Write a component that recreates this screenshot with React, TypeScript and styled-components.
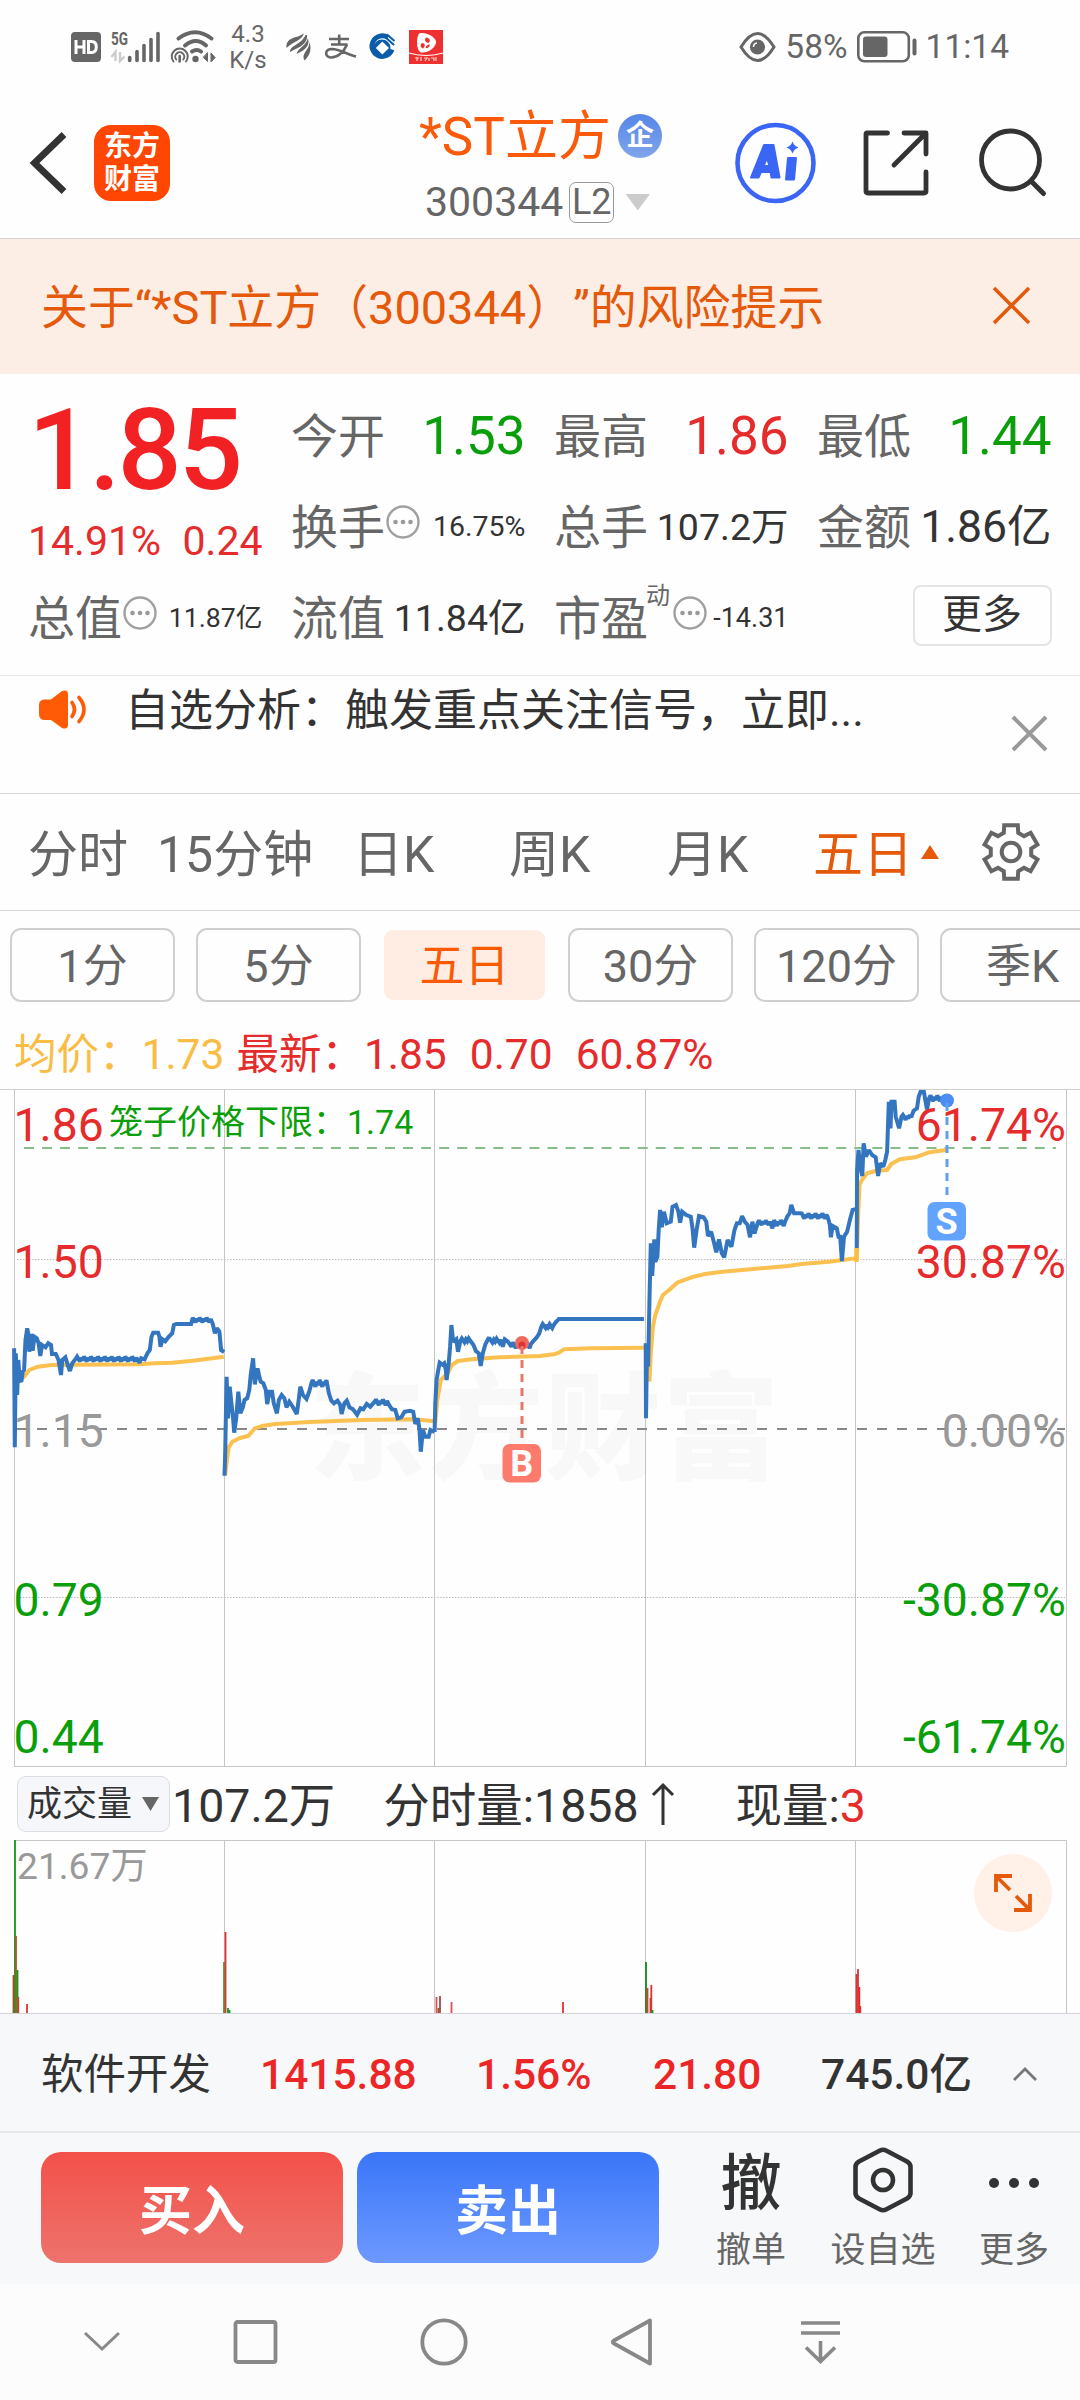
import React from 'react';
import styled, { createGlobalStyle } from 'styled-components';

const GlobalStyle = createGlobalStyle`
  * { box-sizing: border-box; }
  body {
    margin: 0;
    background: #fefefe;
    font-family: Roboto, "Noto Sans CJK SC", sans-serif;
    color: #333;
    text-spacing-trim: space-all;
  }
  svg { display: block; flex: none; overflow: visible; }
  svg text { white-space: pre; }
`;

const RED = '#e52b2b';
const GREEN = '#0a9e0a';
const ORANGE = '#e5590b';
const GREY = '#666';

const Screen = styled.div`
  width: 1080px;
  height: 2400px;
  display: flex;
  flex-direction: column;
  overflow: hidden;
  white-space: nowrap;
  background: #fefefe;
`;

/* ---------- status bar ---------- */
const StatusBar = styled.div`
  height: 88px;
  padding: 6px 71px 0 71px;
  display: flex;
  align-items: center;
  justify-content: space-between;
  color: ${GREY};
`;
const StatusGroup = styled.div<{ $gap?: number }>`
  display: flex;
  align-items: center;
  gap: ${p => p.$gap ?? 0}px;
`;
const Speed = styled.div`
  width: 62px;
  margin-right: 7px;
  text-align: center;
  font-size: 24px;
  line-height: 26px;
  margin-top: -1px;
`;
const StatusText = styled.span`
  font-size: 33.5px;
  line-height: 40px;
`;

/* ---------- header ---------- */
const Header = styled.header`
  height: 150px;
  display: flex;
  align-items: center;
  padding-left: 28px;
`;
const Logo = styled.div`
  width: 76px;
  height: 76px;
  margin-left: 26px;
  border-radius: 17px;
  background: #ff4602;
  color: #fff;
  font-weight: 700;
  font-size: 28px;
  line-height: 33px;
  text-align: center;
  padding-top: 5px;
`;
const TitleBlock = styled.div`
  width: 316px;
  margin: 12px 0 0 249px;
  display: flex;
  flex-direction: column;
`;
const TitleRow = styled.div`
  height: 66px;
  display: flex;
  align-items: center;
  font-size: 53px;
  line-height: 66px;
  color: #fa5a0a;
`;
const TitleText = styled.span`
  margin-top: 2px;
`;
const Badge = styled.span`
  width: 44px;
  height: 44px;
  margin-left: 7px;
  border-radius: 50%;
  background: linear-gradient(#5585e8, #80a6ea);
  color: #fff;
  font-size: 28px;
  font-weight: 700;
  line-height: 43px;
  text-align: center;
`;
const CodeRow = styled.div`
  height: 66px;
  padding-left: 6px;
  display: flex;
  align-items: center;
  font-size: 41px;
  color: ${GREY};
`;
const Level = styled.span`
  width: 45px;
  height: 41px;
  margin-left: 6px;
  border: 1.5px solid #999;
  border-radius: 7px;
  font-size: 36px;
  line-height: 38px;
  text-align: center;
`;
const Caret = styled.i<{ $w: number; $h: number; $c: string; $up?: boolean; $ml?: number }>`
  width: ${p => p.$w}px;
  height: ${p => p.$h}px;
  margin-left: ${p => p.$ml ?? 0}px;
  background: ${p => p.$c};
  clip-path: ${p => (p.$up ? 'polygon(50% 0, 100% 100%, 0 100%)' : 'polygon(0 0, 100% 0, 50% 100%)')};
`;
const HeaderIcons = styled.div`
  display: flex;
  align-items: center;
  gap: 46px;
`;

/* ---------- risk banner ---------- */
const Banner = styled.div`
  height: 136px;
  padding: 0 49px 2px 41px;
  display: flex;
  align-items: center;
  justify-content: space-between;
  border-top: 1px solid #d9d3d3;
  background: #fceee5;
  color: ${ORANGE};
  font-size: 46.9px;
  line-height: 60px;
`;
const BannerText = styled.span`
  margin-top: 5px;
`;

/* ---------- quote ---------- */
const Quote = styled.section`
  height: 301px;
  padding: 16px 27px 0 28px;
  display: grid;
  grid-template-columns: repeat(4, 234.5px);
  grid-template-rows: repeat(3, 91px);
  column-gap: 28.5px;
`;
const PriceBlock = styled.div`
  grid-row: span 2;
  display: flex;
  flex-direction: column;
`;
const Price = styled.div`
  font-size: 113px;
  line-height: 121px;
  font-weight: 500;
  letter-spacing: -3px;
  color: #f22224;
`;
const Change = styled.div`
  display: flex;
  justify-content: space-between;
  font-size: 41px;
  line-height: 60px;
  color: ${RED};
`;
const Cell = styled.div`
  display: flex;
  align-items: center;
`;
const CellLabel = styled.span`
  font-size: 47px;
  line-height: 60px;
  margin-top: 2px;
  color: ${GREY};
`;
const CellSup = styled.sup`
  font-size: 24px;
  line-height: 30px;
  margin: 0 2px 43px -2px;
  color: ${GREY};
`;
const CellValue = styled.span<{ $size: number; $color?: string }>`
  margin-left: auto;
  font-size: ${p => p.$size}px;
  line-height: 60px;
  color: ${p => p.$color ?? '#333'};
`;
const MoreButton = styled.button`
  width: 139px;
  height: 61px;
  margin: 0 0 5px auto;
  padding: 0;
  border: 2px solid #e4e4e6;
  border-radius: 8px;
  background: #fefefe;
  color: #333;
  font: 40px/54px Roboto, "Noto Sans CJK SC", sans-serif;
`;

/* ---------- notice ---------- */
const Notice = styled.div`
  height: 118px;
  padding: 0 32px 0 37px;
  display: flex;
  border-top: 1px solid #e8e8e8;
`;
const NoticeText = styled.span`
  flex: 1;
  margin-left: 36px;
  font-size: 44px;
  line-height: 71px;
  color: #333;
`;

/* ---------- period tabs ---------- */
const Tabs = styled.nav`
  height: 117px;
  padding-left: 28px;
  display: grid;
  grid-template-columns: 129px 196px 156px 158px 146px 108px 60px auto;
  align-items: center;
  border-top: 1px solid #d4d4d4;
  font-size: 50px;
  line-height: 60px;
  color: ${GREY};
`;
const Tab = styled.span<{ $active?: boolean }>`
  margin-top: 6px;
  color: ${p => (p.$active ? ORANGE : GREY)};
`;
const Chips = styled.div`
  height: 110px;
  padding: 17px 0 0 10px;
  display: flex;
  gap: 21px;
  border-top: 1px solid #d4d4d4;
`;
const Chip = styled.span<{ $active?: boolean }>`
  flex: none;
  width: 165px;
  height: 74px;
  border: 2px solid ${p => (p.$active ? 'transparent' : '#d0d0d0')};
  border-radius: 11px;
  background: ${p => (p.$active ? '#ffede4' : '#fefefe')};
  background-clip: padding-box;
  color: ${p => (p.$active ? '#fb5a05' : GREY)};
  font-size: 45px;
  line-height: 73px;
  text-align: center;
`;
const Legend = styled.div`
  height: 69px;
  padding: 1px 0 0 14px;
  display: flex;
  align-items: center;
  font-size: 42.5px;
  line-height: 60px;
  color: ${RED};
`;
const LegendItem = styled.span<{ $color?: string; $gap: number }>`
  margin-right: ${p => p.$gap}px;
  color: ${p => p.$color ?? RED};
`;

/* ---------- volume header ---------- */
const VolumeBar = styled.div`
  height: 72px;
  padding-left: 17px;
  display: flex;
  align-items: center;
  font-size: 46.5px;
  line-height: 60px;
`;
const Select = styled.div`
  width: 153px;
  height: 56px;
  padding-left: 9px;
  display: flex;
  align-items: center;
  border: 1px solid #dcdde0;
  border-radius: 9px;
  background: #f6f7fa;
  font-size: 35px;
  line-height: 50px;
`;
const SelectText = styled.span`
  margin-top: 2px;
`;
const Stat = styled.span<{ $ml: number }>`
  margin: 3px 0 0 ${p => p.$ml}px;
`;
const Hot = styled.span`
  color: ${RED};
`;
const VolumePanel = styled.div`
  position: relative;
  height: 173px;
`;
const Expand = styled.button`
  position: absolute;
  left: 974px;
  top: 14px;
  width: 78px;
  height: 78px;
  padding: 0;
  border: 0;
  border-radius: 50%;
  background: #fff0e8;
  display: grid;
  place-items: center;
`;

/* ---------- bottom ---------- */
const IndexRow = styled.div`
  height: 118px;
  padding: 4px 0 0 41px;
  display: grid;
  grid-template-columns: 219px 216px 177px 168px 190px auto;
  align-items: center;
  border-top: 1px solid #d3d5d8;
  background: #f7f8fa;
  font-size: 42.5px;
  line-height: 60px;
`;
const IndexValue = styled.span<{ $dark?: boolean }>`
  font-weight: 500;
  color: ${p => (p.$dark ? '#333' : '#ec2626')};
`;
const Actions = styled.div`
  height: 153px;
  padding: 19px 0 0 41px;
  display: flex;
  border-top: 2px solid #e6e7e9;
  background: #f7f8fa;
`;
const TradeButton = styled.button<{ $from: string; $to: string }>`
  width: 302px;
  height: 111px;
  margin-right: 14px;
  padding: 9px 0 0 0;
  border: 0;
  border-radius: 20px;
  background: linear-gradient(${p => p.$from}, ${p => p.$to});
  color: #fff;
  font: 700 53px/102px Roboto, "Noto Sans CJK SC", sans-serif;
`;
const Tool = styled.div<{ $w: number; $ml: number }>`
  width: ${p => p.$w}px;
  margin: -5px 0 0 ${p => p.$ml}px;
  display: flex;
  flex-direction: column;
  align-items: center;
  font-size: 35px;
  line-height: 48px;
  color: ${GREY};
`;
const ToolIcon = styled.div`
  height: 80px;
  display: flex;
  align-items: center;
  font-size: 61px;
  line-height: 66px;
  color: #333;
  padding-bottom: 14px;
`;
const ToolGlyph = styled.span`
  margin-top: 8px;
  font-weight: 500;
`;
const NavBar = styled.div`
  flex: 1;
  padding-left: 82px;
  display: grid;
  grid-template-columns: 150px 187px 190px 189px auto;
  align-items: center;
  background: #fcfcfc;
`;

/* ---------- icons ---------- */
const HdIcon = () => (
  <svg width="30" height="30" viewBox="0 0 30 30">
    <rect width="30" height="30" rx="4" fill="#666" />
    <path d="M5 8V22M13 8V22M5 15H13M17.5 9.6V20.4H20.5Q25.3 20.4 25.3 15T20.5 9.6Z" fill="none" stroke="#fff" strokeWidth="3" />
  </svg>
);
const SignalIcon = () => (
  <svg width="50" height="34" viewBox="0 0 50 34">
    <text x="0" y="15" fontSize="18.500" fontWeight="700" fill="#666" textLength="17" lengthAdjust="spacingAndGlyphs">5G</text>
    <path d="M4.5 31V22L0.5 27M9 22V31L13.5 26.5" fill="none" stroke="#ccc" strokeWidth="2.4" />
    {[[18.7, 26], [26, 20], [33, 14], [40, 8], [47, 2]].map(([x, y]) => (
      <path key={x} d={`M${x} ${y + 1.5}V30.5`} stroke="#666" strokeWidth="3.6" strokeLinecap="round" />
    ))}
  </svg>
);
const WifiIcon = () => (
  <svg width="46" height="34" viewBox="0 0 46 34" fill="none" stroke="#666" strokeLinecap="round">
    <path d="M7.5 8.5Q24 -4 40.5 8.5M14 15.5Q25 6.500 35 15.500" strokeWidth="4" />
    <path d="M21 21.500Q26 18.500 30 21.500" strokeWidth="4" />
    <circle cx="24.500" cy="29" r="3.200" fill="#666" stroke="none" />
    <path d="M2.500 31.500A8 8 0 1 1 15 31.500M5.200 29.500A4.500 4.500 0 1 1 12.300 29.500" strokeWidth="2" />
    <path d="M8.700 26V31.500" strokeWidth="2.600" />
    <path d="M36.500 23V31.500L32.500 27.500ZM40 31.500V23L44 27.500Z" fill="#666" strokeWidth="1" />
  </svg>
);
const WingIcon = () => (
  <svg width="25" height="28" viewBox="0 0 25 28" fill="#666">
    <path d="M0.500 15C-0.500 7 6 5 12 3.500L18 0.500C15 8 8 8 0.500 15Z" />
    <path d="M4 19C4 12 15 12 19.500 2L21 2C22 12 11 15 4 19Z" />
    <path d="M10.500 21C12 15 20 13 22 5C24.500 14 17 18 10.500 21Z" />
    <path d="M18.500 27.500C15 20 23 18 23.500 9C26 17 23.500 23 18.500 27.500Z" />
  </svg>
);
const AlipayIcon = () => (
  <svg width="32" height="26" viewBox="0 0 32 26" fill="none" stroke="#666">
    <path d="M4 5H24M14.200 0.500V10.500M6 10.500H22.500" strokeWidth="2.600" />
    <path d="M22 10.500C19 18 12 24 5.500 23.500C-1 22.500 0 15 7 15C14 15.200 22 20 31 22.500" strokeWidth="2.600" />
  </svg>
);
const BankIcon = () => (
  <svg width="25" height="26" viewBox="0 0 25 26">
    <path d="M18 3.500A10.300 10.300 0 1 0 22 15.500" fill="none" stroke="#0a5ca8" strokeWidth="5" />
    <circle cx="12" cy="14" r="8.500" fill="#0a5ca8" />
    <path d="M12.300 7.500L19 14L12.300 20.500L5.800 14Z" fill="#fff" />
    <path d="M13 1L24 11M17 0.500L24.500 7" stroke="#0a5ca8" strokeWidth="2" />
  </svg>
);
const RedAppIcon = () => (
  <svg width="34" height="34" viewBox="0 0 34 34">
    <rect width="34" height="34" fill="#ee3030" />
    <path d="M11 3C19 2 28 8 27 13C25 20 16 24 11 22C7 19 7 5 11 3Z" fill="#fff" />
    <path d="M17 7.500C21 8 22 11 19.500 13C16.500 12.500 15 10 17 7.500ZM13 13C16 13 17 16 14 18.500C11 17 11 15 13 13ZM21 14.500C20 18 18.500 18.500 16.500 18C17.500 15 19 14 21 14.500Z" fill="#ee3030" />
    <path d="M0 23Q17 28 34 23" stroke="#fff" strokeWidth="1" fill="none" />
    <path d="M6 28H10M8 27V31M12 27V31M15 28H18L16 31M20 28V31M22 28H25V31M27 27V31" stroke="#fbd0d0" strokeWidth="1.200" fill="none" />
  </svg>
);
const EyeIcon = () => (
  <svg width="37" height="30" viewBox="0 0 37 30">
    <path d="M2 15Q18.500 -12 35 15Q18.500 42 2 15Z" fill="none" stroke="#666" strokeWidth="3" />
    <circle cx="18.500" cy="15" r="7.600" fill="#666" />
    <path d="M14.500 15A4 4 0 0 1 18 11" stroke="#fff" strokeWidth="1.600" fill="none" />
  </svg>
);
const BatteryIcon = () => (
  <svg width="60" height="32" viewBox="0 0 60 32">
    <rect x="1.300" y="1.300" width="50.500" height="29" rx="6" fill="none" stroke="#666" strokeWidth="2.600" />
    <rect x="6" y="5.500" width="24.500" height="20.500" rx="3" fill="#666" />
    <rect x="55.500" y="7.500" width="4" height="17" rx="2" fill="#666" />
  </svg>
);
const BackIcon = () => (
  <svg width="40" height="66" viewBox="0 0 40 66">
    <path d="M36 4.500L6.500 33L36 61.500" fill="none" stroke="#333" strokeWidth="6.800" />
  </svg>
);
const AiIcon = () => (
  <svg width="81" height="82" viewBox="0 0 81 82">
    <circle cx="40.500" cy="41" r="38" fill="none" stroke="#3b66f5" strokeWidth="4.600" />
    <path fillRule="evenodd" fill="#3b66f5" stroke="#3b66f5" strokeWidth="2" strokeLinejoin="round" d="M29 23H38.500L44.500 55.500H36.500L35.600 50H26L23.500 55.500H16ZM32 36L28.500 44H34.500Z" />
    <path d="M53 36H61L59 57.500H51Z" fill="#3b66f5" stroke="#3b66f5" strokeWidth="2" strokeLinejoin="round" />
    <path d="M57.500 19.500Q59 24 63.500 25.500Q59 27 57.500 31.500Q56 27 51.500 25.500Q56 24 57.500 19.500Z" fill="#3b66f5" />
  </svg>
);
const ShareIcon = () => (
  <svg width="68" height="68" viewBox="0 0 68 68" fill="none" stroke="#333" strokeWidth="4.800" strokeLinecap="round" strokeLinejoin="round">
    <path d="M25.500 4H5Q4 4 4 5V62Q4 64 6 64H62Q64 64 64 62V43M42 4H64V25M63 5L32 36" />
  </svg>
);
const SearchIcon = () => (
  <svg width="70" height="70" viewBox="0 0 70 70" fill="none" stroke="#333" strokeWidth="4.800" strokeLinecap="round">
    <circle cx="34.500" cy="32" r="29" />
    <path d="M55.500 53.500L67.500 65.500" strokeWidth="5" />
  </svg>
);
const CloseIcon = ({ size, color, width }: { size: number; color: string; width: number }) => (
  <svg width={size} height={size} viewBox={`0 0 ${size} ${size}`}>
    <path d={`M2 2L${size - 2} ${size - 2}M${size - 2} 2L2 ${size - 2}`} stroke={color} strokeWidth={width} />
  </svg>
);
const DotsSvg = styled.svg`
  margin: 0 0 10px 1px;
`;
const DotsIcon = () => (
  <DotsSvg width="34" height="34" viewBox="0 0 34 34">
    <circle cx="17" cy="17" r="15.500" fill="none" stroke="#a0a0a0" strokeWidth="2.400" />
    {[9.500, 17, 24.500].map(x => <circle key={x} cx={x} cy="17" r="2.300" fill="#999" />)}
  </DotsSvg>
);
const SpeakerSvg = styled.svg`
  margin-top: 13px;
`;
const SpeakerIcon = () => (
  <SpeakerSvg width="52" height="42" viewBox="0 0 52 42">
    <path d="M8 10.500H14L25 2Q31 0 31 5V36Q31 41 25 39L14 31H8Q2 31 2 25V16Q2 10.500 8 10.500Z" fill="#ff5a05" />
    <path d="M35 13.500Q40 20.500 35 27.500M42 8.500Q52 20.500 42 32.500" fill="none" stroke="#ff5a05" strokeWidth="3.600" strokeLinecap="round" />
  </SpeakerSvg>
);
const NoticeClose = styled.div`
  margin-top: 39px;
`;
const GearIcon = () => {
  const pts: string[] = [];
  for (let i = 0; i < 6; i++) {
    const base = (-90 + i * 60) * (Math.PI / 180);
    [[-0.36, 20.500], [-0.25, 27.500], [0.25, 27.500], [0.36, 20.500]].forEach(([a, r]) => {
      pts.push(`${30 + r * Math.cos(base + a)},${30 + r * Math.sin(base + a)}`);
    });
  }
  return (
    <svg width="60" height="60" viewBox="0 0 60 60" fill="none" stroke="#666" strokeWidth="4">
      <polygon points={pts.join(' ')} strokeLinejoin="miter" />
      <circle cx="30" cy="30" r="9.300" />
    </svg>
  );
};
const ArrowUp = styled.svg`
  margin-left: 12px;
`;

/* ---------- price chart ---------- */
type Pt = [number, number];
const SX = 1 / 2.904;
const plot = (pts: Pt[]) =>
  pts.map(([x, y], i) => `${i ? 'L' : 'M'}${(x * SX).toFixed(1)} ${(y / 3 - 19).toFixed(1)}`).join('');
/* quiet trading: the line ticks up and down around a level */
const flat = (x1: number, x2: number, y: number, amp: number): Pt[] => {
  const out: Pt[] = [];
  for (let x = x1, i = 0; x <= x2; x += 4, i++) out.push([x, y + (((i * 7) % 5) - 2) * amp / 2.8]);
  return out;
};
const shift = (pts: Pt[]): Pt[] => pts.map(([x, y]) => [x + 1568, y]);

const day1: Pt[] = [[41, 835], [43, 1132], [46, 850], [50, 975], [53, 870], [57, 930], [62, 935], [66, 905], [70, 900], [74, 810], [79, 775], [82, 790], [85, 845], [90, 792], [95, 842], [100, 800], [107, 805], [112, 820], [117, 858], [122, 825], [132, 832], [140, 820], [148, 825], [151, 852], [162, 852], [170, 870], [177, 915], [181, 870], [190, 862], [197, 885], [203, 903], [210, 880], [220, 866],
  ...flat(224, 400, 867, 10), [405, 878], [410, 865], [420, 868], [428, 850], [435, 840], [440, 800], [445, 788], [459, 788], [463, 800], [466, 830], [472, 808], [480, 814], [490, 800], [500, 790], [505, 765], [512, 762], [555, 762], ...flat(560, 614, 750, 9), [618, 762], [624, 790], [630, 775], [637, 785], [642, 840], [651, 846]];
const day2: Pt[] = [[652, 1217], [654, 1150], [658, 920], [662, 1045], [667, 950], [672, 1000], [677, 1045], [680, 1088], [686, 1045], [692, 965], [698, 1030], [705, 1012], [710, 990], [718, 985], [724, 960], [728, 915], [735, 865], [740, 943], [748, 895], [752, 915], [757, 935], [765, 940], [772, 960], [776, 1002], [783, 965], [790, 965], [795, 1000], [804, 1030], [810, 990], [818, 975], [826, 985], [832, 1012], [840, 995], [850, 1010], [862, 1032], [868, 985], [872, 950], [880, 975], [890, 987], [898, 965], [905, 938], ...flat(908, 950, 940, 14), [955, 970], [962, 992], [970, 1000], [980, 992], [988, 1005], [992, 1032], [1000, 1000], [1007, 992], [1015, 1012], [1025, 1018], [1037, 1034], [1047, 1015], [1055, 1018], [1065, 1002], [1075, 1010], [1088, 995], ...flat(1092, 1130, 997, 12), [1138, 1018], [1148, 1020], [1155, 1045], [1165, 1042], [1175, 1025], [1190, 1022], [1200, 1025], [1206, 1062], [1213, 1045], [1218, 1075], [1222, 1145], [1228, 1080], [1235, 1100], [1245, 1100], [1250, 1080], [1262, 1086]];
const day3: Pt[] = [[1262, 1086], [1264, 1000], [1268, 930], [1272, 905], [1277, 878], [1285, 884], [1290, 880], [1295, 900], [1297, 930], [1303, 880], [1307, 830], [1311, 765], [1316, 815], [1325, 808], [1330, 845], [1337, 812], ...flat(1341, 1371, 811, 8), [1375, 825], [1382, 843], [1390, 850], [1396, 888], [1402, 850], [1410, 822], [1418, 806], ...flat(1422, 1454, 812, 8), [1460, 830], [1466, 808], [1475, 815], [1485, 830], ...flat(1490, 1542, 826, 12), [1550, 812], [1558, 803], [1566, 790], [1572, 770], ...flat(1576, 1610, 768, 8), [1615, 755], [1623, 747], [1870, 747]];
const day4: Pt[] = shift([[307, 820], [308, 1045], [311, 830], [314, 890], [318, 700], [322, 520], [326, 618], [332, 508], [335, 575], [341, 560], [345, 480], [349, 420], [354, 472], [360, 425], [368, 460], [380, 455], [385, 410], [395, 405], [402, 425], [407, 458], [413, 425], [425, 435], [438, 440], [443, 475], [448, 533], [455, 480], [462, 438], [475, 442], [483, 455], [488, 498], [497, 485], [505, 515], [512, 547], [520, 508], [528, 550], [535, 562], [545, 510], [556, 530], [565, 480], [572, 460], [580, 460], [587, 438], [595, 455], [603, 465], [610, 502], [617, 455], [623, 490], [632, 460], ...flat(636, 668, 458, 9), [675, 475], ...flat(680, 712, 459, 12), [718, 440], [725, 430], [730, 405], [738, 430], [755, 430], ...flat(760, 838, 438, 11), [842, 465], [845, 502], [850, 468], [862, 475], [867, 500], [872, 500], [877, 573], [883, 500], [892, 485], [900, 450], [908, 420], [917, 418]]);
const day5: Pt[] = shift([[920, 535], [921, 300], [925, 240], [930, 290], [936, 318], [940, 220], [947, 260], [955, 240], [965, 255], [975, 262], [982, 318], [988, 280], [997, 290], [1003, 270], [1008, 245], [1013, 95], [1018, 175], [1021, 95], [1030, 95], [1033, 140], [1043, 175], [1050, 140], ...flat(1054, 1080, 142, 10), [1085, 122], [1095, 115], [1100, 80], [1105, 66], [1115, 66], [1120, 95], [1124, 118], [1130, 85], ...flat(1134, 1180, 85, 12)]);

const avg1: Pt[] = [[52, 935], [70, 920], [85, 900], [110, 890], [150, 885], [215, 884], [400, 883], [450, 880], [500, 878], [560, 872], [600, 867], [650, 860]];
const avg2: Pt[] = [[654, 1215], [658, 1180], [664, 1132], [675, 1115], [695, 1105], [722, 1097], [740, 1075], [765, 1067], [800, 1062], [900, 1056], [1050, 1050], [1200, 1048], [1262, 1054]];
const avg3: Pt[] = [[1264, 1060], [1270, 990], [1280, 930], [1300, 910], [1312, 885], [1330, 873], [1370, 868], [1450, 862], [1568, 858], [1608, 853], [1623, 848], [1638, 838], [1718, 835], [1870, 833]];
const avg4: Pt[] = shift([[318, 935], [322, 850], [328, 770], [335, 735], [347, 700], [357, 675], [375, 660], [400, 637], [440, 622], [480, 612], [530, 605], [620, 597], [720, 588], [760, 582], [840, 575], [917, 565]]);
const avg5: Pt[] = shift([[920, 573], [924, 440], [928, 345], [935, 330], [950, 310], [975, 303], [1008, 300], [1020, 282], [1045, 268], [1090, 262], [1130, 247], [1180, 240]]);

const GRID_X = [14.5, 224.5, 434.5, 645.5, 855.5, 1066.5];
const axis: { y: number; left: string; right: string; color: string }[] = [
  { y: 52, left: '1.86', right: '61.74%', color: RED },
  { y: 189, left: '1.50', right: '30.87%', color: RED },
  { y: 358, left: '1.15', right: '0.00%', color: '#999' },
  { y: 527, left: '0.79', right: '-30.87%', color: GREEN },
  { y: 664, left: '0.44', right: '-61.74%', color: GREEN },
];

const PriceChart = () => (
  <svg width="1080" height="679" viewBox="0 0 1080 679">
    <text x="309" y="381" fontSize="116" fontWeight="900" fill="#f8f8f8" letterSpacing="2">东方财富</text>
    <path d="M0 0.500H1080" stroke="#cfcfcf" />
    <path d={GRID_X.map(x => `M${x} 1V677.500`).join('') + 'M14 677.500H1066'} stroke="#c6c6c6" fill="none" />
    <path d="M17 170.500H1065M17 508.500H1065" stroke="#bbb" strokeDasharray="1.500 1.500" />
    <path d="M24 59H1056" stroke="#86bd8b" strokeWidth="2" strokeDasharray="10 8.050" />
    <path d="M17 340H1065" stroke="#888" strokeWidth="2" strokeDasharray="10 10" />
    <g fill="none" strokeWidth="4" strokeLinejoin="round">
      {[avg1, avg2, avg3, avg4, avg5].map((d, i) => <path key={i} d={plot(d)} stroke="#fac150" />)}
      {[day1, day2, day3, day4, day5].map((d, i) => <path key={i} d={plot(d)} stroke="#3375bf" strokeLinejoin="miter" strokeMiterlimit="2" />)}
      <path d="M856.300 159V173" stroke="#fcbe3c" strokeWidth="4" />
    </g>
    <circle cx="522" cy="254" r="7" fill="#f0685c" />
    <circle cx="522" cy="256" r="3.500" fill="#dc3434" />
    <path d="M522 257V355" stroke="#e8776b" strokeWidth="3" strokeDasharray="8 6" />
    <rect x="502.500" y="355" width="38.500" height="38.500" rx="7" fill="#fc7b6c" />
    <text x="521.700" y="387" fontSize="36" fontWeight="700" fill="#fff" textAnchor="middle">B</text>
    <circle cx="947" cy="11.500" r="7" fill="#4b8df0" />
    <path d="M947 14V112" stroke="#5e9fee" strokeWidth="3" strokeDasharray="8 6" />
    <rect x="927.500" y="113" width="38.500" height="38.500" rx="7" fill="#62a4fd" />
    <text x="946.700" y="145" fontSize="36" fontWeight="700" fill="#fff" textAnchor="middle">S</text>
    {axis.map(a => (
      <g key={a.left} fontSize="46.300" fill={a.color}>
        <text x="13.500" y={a.y}>{a.left}</text>
        <text x="1066" y={a.y} textAnchor="end">{a.right}</text>
      </g>
    ))}
    <text x="109" y="44.500" fontSize="34" fill={GREEN}>笼子价格下限：1.74</text>
  </svg>
);

const volumes: [number, number, string][] = [
  [13.500, 135, '#8a5a20'], [15, 0, '#15981b'], [16, 96, '#b0502c'], [17.500, 130, '#15981b'], [18.300, 157, '#d0402c'], [27, 164, '#e03030'],
  [224, 122, '#4b9a30'], [225.500, 92, '#dd3434'], [228, 168, '#15981b'], [229.500, 170, '#15981b'],
  [436.500, 157, '#e05050'], [438.500, 168, '#80601a'], [440, 156, '#a04848'], [451.500, 162, '#e05050'], [563, 162, '#e03030'],
  [646, 122, '#15881b'], [647.500, 148, '#d04030'], [650.500, 158, '#b04030'], [651.300, 145, '#e03030'], [652.500, 170, '#15981b'],
  [856.500, 134, '#e03030'], [858, 129, '#d03838'], [859.300, 147, '#e52525'], [860.300, 166, '#e03030'],
];

const VolumeChart = () => (
  <svg width="1080" height="173" viewBox="0 0 1080 173">
    <path d={'M14 0.500H1066.500' + GRID_X.map(x => `M${x} 0V173`).join('')} stroke="#c6c6c6" fill="none" />
    {volumes.map(([x, y, c]) => <path key={x} d={`M${x} ${y}V173`} stroke={c} strokeWidth="1.800" />)}
    <text x="17" y="39" fontSize="37.200" fill="#999">21.67万</text>
  </svg>
);

export default function App() {
  return (
    <Screen>
      <GlobalStyle />
      <StatusBar>
        <StatusGroup>
          <StatusGroup $gap={10}>
            <HdIcon />
            <SignalIcon />
            <WifiIcon />
          </StatusGroup>
          <Speed>4.3<br />K/s</Speed>
          <StatusGroup $gap={13.5}>
            <WingIcon />
            <AlipayIcon />
            <BankIcon />
            <RedAppIcon />
          </StatusGroup>
        </StatusGroup>
        <StatusGroup $gap={9}>
          <EyeIcon />
          <StatusText>58%</StatusText>
          <BatteryIcon />
          <StatusText>11:14</StatusText>
        </StatusGroup>
      </StatusBar>

      <Header>
        <BackIcon />
        <Logo>东方<br />财富</Logo>
        <TitleBlock>
          <TitleRow><TitleText>*ST立方</TitleText><Badge>企</Badge></TitleRow>
          <CodeRow>
            300344<Level>L2</Level>
            <Caret $w={25} $h={17} $c="#ccc" $ml={11} />
          </CodeRow>
        </TitleBlock>
        <HeaderIcons>
          <AiIcon />
          <ShareIcon />
          <SearchIcon />
        </HeaderIcons>
      </Header>

      <Banner>
        <BannerText>关于“*ST立方（300344）”的风险提示</BannerText>
        <CloseIcon size={39} color={ORANGE} width={3.6} />
      </Banner>

      <Quote>
        <PriceBlock>
          <Price>1.85</Price>
          <Change><span>14.91%</span><span>0.24</span></Change>
        </PriceBlock>
        <Cell><CellLabel>今开</CellLabel><CellValue $size={53} $color={GREEN}>1.53</CellValue></Cell>
        <Cell><CellLabel>最高</CellLabel><CellValue $size={53} $color={RED}>1.86</CellValue></Cell>
        <Cell><CellLabel>最低</CellLabel><CellValue $size={53} $color={GREEN}>1.44</CellValue></Cell>
        <Cell><CellLabel>换手</CellLabel><DotsIcon /><CellValue $size={28.5}>16.75%</CellValue></Cell>
        <Cell><CellLabel>总手</CellLabel><CellValue $size={37.5}>107.2万</CellValue></Cell>
        <Cell><CellLabel>金额</CellLabel><CellValue $size={44.5}>1.86亿</CellValue></Cell>
        <Cell><CellLabel>总值</CellLabel><DotsIcon /><CellValue $size={26.7}>11.87亿</CellValue></Cell>
        <Cell><CellLabel>流值</CellLabel><CellValue $size={37.5}>11.84亿</CellValue></Cell>
        <Cell><CellLabel>市盈</CellLabel><CellSup>动</CellSup><DotsIcon /><CellValue $size={27}>-14.31</CellValue></Cell>
        <Cell><MoreButton>更多</MoreButton></Cell>
      </Quote>

      <Notice>
        <SpeakerIcon />
        <NoticeText>自选分析：触发重点关注信号，立即...</NoticeText>
        <NoticeClose><CloseIcon size={37} color="#999" width={4} /></NoticeClose>
      </Notice>

      <Tabs>
        <Tab>分时</Tab>
        <Tab>15分钟</Tab>
        <Tab>日K</Tab>
        <Tab>周K</Tab>
        <Tab>月K</Tab>
        <Tab $active>五日</Tab>
        <Caret $w={18} $h={14} $c={ORANGE} $up />
        <GearIcon />
      </Tabs>

      <Chips>
        <Chip>1分</Chip>
        <Chip>5分</Chip>
        <Chip $active>五日</Chip>
        <Chip>30分</Chip>
        <Chip>120分</Chip>
        <Chip>季K</Chip>
      </Chips>

      <Legend>
        <LegendItem $color="#f9bd45" $gap={12}>均价：1.73</LegendItem>
        <LegendItem $gap={23}>最新：1.85</LegendItem>
        <LegendItem $gap={23}>0.70</LegendItem>
        <LegendItem $gap={0}>60.87%</LegendItem>
      </Legend>

      <PriceChart />

      <VolumeBar>
        <Select><SelectText>成交量</SelectText><Caret $w={17} $h={14} $c="#666" $ml={10} /></Select>
        <Stat $ml={2}>107.2万</Stat>
        <Stat $ml={48}>分时量:1858</Stat>
        <ArrowUp width="24" height="44" viewBox="0 0 24 44">
          <path d="M12 43V3M2 13L12 3L22 13" fill="none" stroke="#333" strokeWidth="3" />
        </ArrowUp>
        <Stat $ml={61}>现量:<Hot>3</Hot></Stat>
      </VolumeBar>

      <VolumePanel>
        <VolumeChart />
        <Expand aria-label="expand">
          <svg width="40" height="40" viewBox="0 0 40 40" fill="none" stroke={ORANGE} strokeWidth="3.800">
            <path d="M3 19V3H19M3.500 3.500L17 17M37 21V37H21M36.500 36.500L23 23" />
          </svg>
        </Expand>
      </VolumePanel>

      <IndexRow>
        <span>软件开发</span>
        <IndexValue>1415.88</IndexValue>
        <IndexValue>1.56%</IndexValue>
        <IndexValue>21.80</IndexValue>
        <IndexValue $dark>745.0亿</IndexValue>
        <svg width="28" height="18" viewBox="0 0 28 18">
          <path d="M3 14L14 3L25 14" fill="none" stroke="#777" strokeWidth="2.800" />
        </svg>
      </IndexRow>

      <Actions>
        <TradeButton $from="#f3514a" $to="#ed736c">买入</TradeButton>
        <TradeButton $from="#3a76f8" $to="#6d99ff">卖出</TradeButton>
        <Tool $w={72} $ml={42}>
          <ToolIcon><ToolGlyph>撤</ToolGlyph></ToolIcon>
          撤单
        </Tool>
        <Tool $w={108} $ml={42}>
          <ToolIcon>
            <svg width="62" height="66" viewBox="0 0 62 66" fill="none" stroke="#333" strokeWidth="4.600" strokeLinejoin="round">
              <path d="M28 3.500Q31 2 34 3.500L55 14.500Q58.500 16.500 58.500 20V46Q58.500 49.500 55 51.500L34 62.500Q31 64 28 62.500L7 51.500Q3.500 49.500 3.500 46V20Q3.500 16.500 7 14.500Z" />
              <circle cx="31" cy="33" r="10" />
            </svg>
          </ToolIcon>
          设自选
        </Tool>
        <Tool $w={72} $ml={41}>
          <ToolIcon>
            <svg width="56" height="66" viewBox="0 0 56 66" fill="#333">
              <circle cx="8" cy="36" r="5" />
              <circle cx="28" cy="36" r="5" />
              <circle cx="48" cy="36" r="5" />
            </svg>
          </ToolIcon>
          更多
        </Tool>
      </Actions>

      <NavBar>
        <svg width="40" height="26" viewBox="0 0 40 26" fill="none" stroke="#888" strokeWidth="3">
          <path d="M3 4L20 20L37 4" />
        </svg>
        <svg width="46" height="46" viewBox="0 0 46 46" fill="none" stroke="#888" strokeWidth="3.800">
          <rect x="3.500" y="3" width="40" height="40" rx="2" />
        </svg>
        <svg width="50" height="50" viewBox="0 0 50 50" fill="none" stroke="#888" strokeWidth="3.800">
          <circle cx="25" cy="25" r="21.700" />
        </svg>
        <svg width="46" height="50" viewBox="0 0 46 50" fill="none" stroke="#888" strokeWidth="3.800" strokeLinejoin="round">
          <path d="M41 3.500V46.500L5 26.500Q2.500 25 5 23.500Z" />
        </svg>
        <svg width="44" height="48" viewBox="0 0 44 48" fill="none" stroke="#888" strokeWidth="3.600">
          <path d="M3 5H42M3 15H42M22.500 23V43M8 29.500L22.500 43.500L37 29.500" />
        </svg>
      </NavBar>
    </Screen>
  );
}
